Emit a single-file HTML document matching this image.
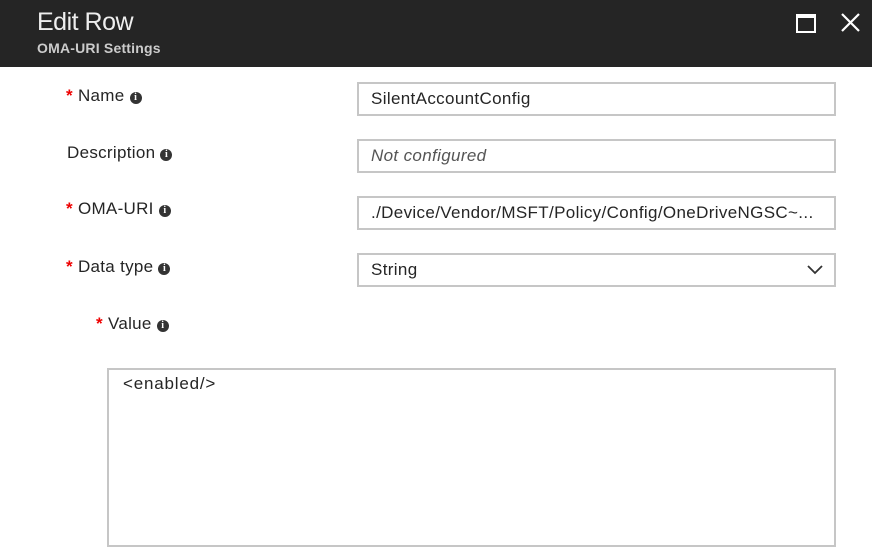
<!DOCTYPE html>
<html><head><meta charset="utf-8"><style>
body{margin:0;width:872px;height:558px;background:#fff;font-family:"Liberation Sans",sans-serif;position:relative;overflow:hidden;color:#252525}
.hdr{position:absolute;left:0;top:0;width:872px;height:67px;background:#252525}
.t{position:absolute;left:37px;top:8px;font-size:25px;color:#eee;letter-spacing:-0.5px}
.s{position:absolute;left:37px;top:40px;font-size:14px;color:#ccc;font-weight:bold;letter-spacing:0.2px}
.lbl{position:absolute;font-size:17px;color:#252525;letter-spacing:0.3px}
.st{color:#e00;font-weight:bold}
.i{display:inline-block;width:12px;height:12px;border-radius:50%;background:#333;color:#fff;font-size:10px;line-height:12px;text-align:center;font-weight:bold;vertical-align:1px;margin-left:5px;font-family:"Liberation Serif",serif;letter-spacing:0}
.in{position:absolute;left:357px;border:1px solid #c6c6c6;box-shadow:inset 0 0 0 1px #c6c6c6;font-size:17px;line-height:32px;padding-left:13px;box-sizing:border-box;width:479px;height:34px;letter-spacing:0.35px;white-space:nowrap;overflow:hidden}
</style></head><body>
<div class="hdr"><div class="t">Edit Row</div><div class="s">OMA-URI Settings</div>
<div style="position:absolute;left:796px;top:14px;width:16px;height:13px;border:2px solid #fff;border-top-width:4px"></div>
<svg style="position:absolute;left:841px;top:13px" width="19" height="19"><path d="M1 1L18 18M18 1L1 18" stroke="#fff" stroke-width="2.2"/></svg>
</div>
<div class="lbl" style="left:66px;top:86px"><span class="st">*</span> Name<span class="i">i</span></div>
<div class="lbl" style="left:67px;top:143px">Description<span class="i">i</span></div>
<div class="lbl" style="left:66px;top:199px"><span class="st">*</span> OMA-URI<span class="i">i</span></div>
<div class="lbl" style="left:66px;top:257px"><span class="st">*</span> Data type<span class="i">i</span></div>
<div class="lbl" style="left:96px;top:314px"><span class="st">*</span> Value<span class="i">i</span></div>
<div class="in" style="top:82px">SilentAccountConfig</div>
<div class="in" style="top:139px;font-style:italic;color:#555">Not configured</div>
<div class="in" style="top:196px">./Device/Vendor/MSFT/Policy/Config/OneDriveNGSC~...</div>
<div class="in" style="top:253px">String
<svg style="position:absolute;right:12px;top:11px" width="16" height="10"><path d="M1 1L8 8L15 1" stroke="#333" stroke-width="1.8" fill="none"/></svg></div>
<div style="position:absolute;left:107px;top:368px;width:729px;height:179px;box-sizing:border-box;border:2px solid #c6c6c6;font-size:17px;padding:4px 0 0 14px;letter-spacing:0.8px">&lt;enabled/&gt;</div>
</body></html>
